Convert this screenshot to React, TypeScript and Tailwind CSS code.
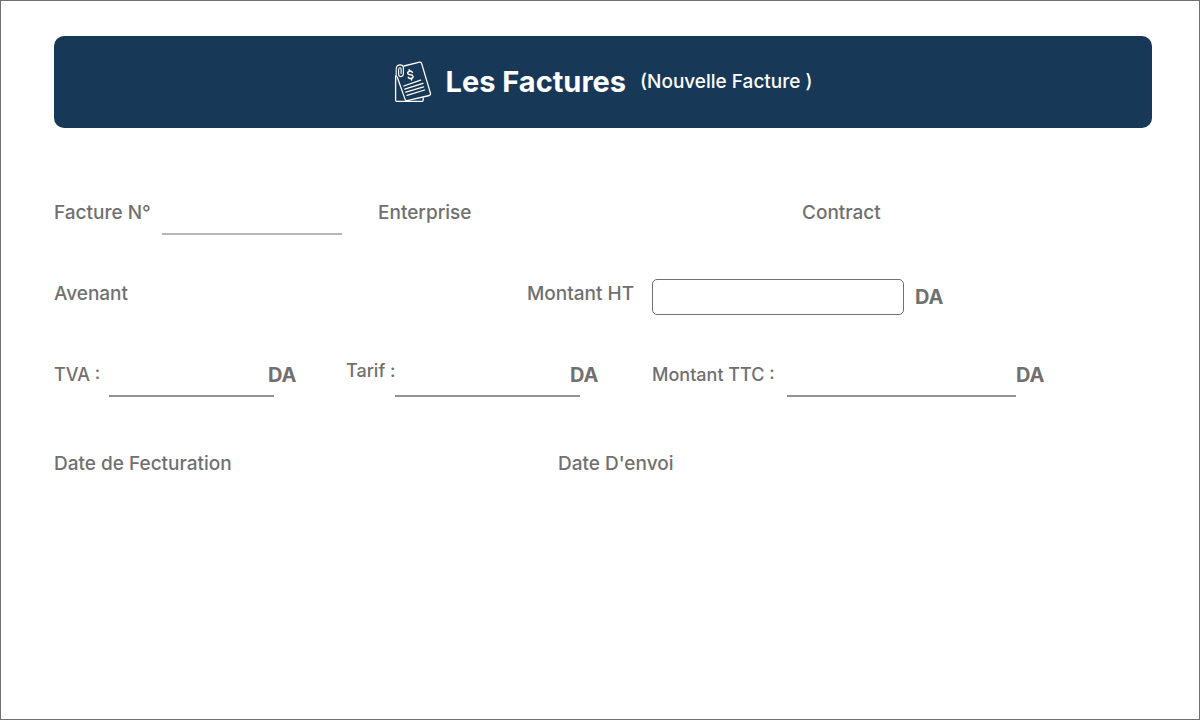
import type { ReactNode } from "react";

function InvoiceIcon() {
  return (
    <svg
      viewBox="0 0 38 42"
      className="h-[42px] w-[38px] shrink-0"
      fill="none"
      stroke="white"
      strokeLinecap="round"
      strokeLinejoin="round"
      aria-hidden="true"
    >
      <path d="M1.6 15V39.3Q1.6 40.4 2.8 40.4H28Q29.2 40.4 29.2 39V37.2" strokeWidth="1.3" />
      <path d="M10 5L25.6 1.2Q27.2.9 27.6 2.4L36.5 32.4Q36.9 34 35.4 34.5L13.2 39.7Q11.7 40 11.2 38.6L3.2 16" strokeWidth="1.3" />
      <path d="M2.2 15.5V8Q2.2 4.4 5.6 3.9Q9 3.6 9.4 6.6V12.6Q9.3 15.6 6.9 15.6Q4.6 15.5 4.6 13V8.6Q4.7 6.7 6 6.7Q7.1 6.7 7.1 8.2V12.4" strokeWidth="1.1" />
      <path d="M18.4 11.4Q17.5 9.8 15.5 10.2Q13.4 10.8 13.8 12.5Q14.2 13.7 16.4 13.7Q18.7 13.8 19 15.3Q19.3 17 17.2 17.5Q15.2 17.9 14.3 16.4M15.2 8.8L15.5 10.2M17.2 17.5L17.6 18.9" strokeWidth="1.5" />
      <path d="M9.8 25L26.6 19.2M10.8 28.2L29 22.4M11.8 31.2L29.6 25.8M13 34.4L30.6 29" strokeWidth="1.3" />
    </svg>
  );
}

const underline = "h-9 min-w-0 border-b-2 bg-transparent px-2 outline-none";

function Currency({ className = "" }: { className?: string }) {
  return <span className={`text-xl leading-7 font-bold ${className}`}>DA</span>;
}

function Field({ children }: { children: ReactNode }) {
  return <div className="flex items-start">{children}</div>;
}

export default function App() {
  return (
    <main className="min-h-screen border border-[#707070] bg-white pt-[35px] pr-[47px] pb-10 pl-[53px] font-['Inter',sans-serif] text-[19px] font-medium text-[#707070]">
      <header className="flex items-center justify-center rounded-[10px] bg-[#183857] py-[25px] text-white">
        <InvoiceIcon />
        <h1 className="ml-3.5 text-[29px] leading-10 font-bold">Les Factures</h1>
        <span className="ml-3.5 leading-10">(Nouvelle Facture )</span>
      </header>

      <form className="mt-[71px]">
        <div className="grid grid-cols-[324fr_424fr_350fr]">
          <Field>
            <label htmlFor="numero" className="w-[108px] shrink-0 leading-7">Facture N°</label>
            <input id="numero" className={`${underline} w-[180px] border-[#b7b7b7]`} />
          </Field>
          <span className="leading-7">Enterprise</span>
          <span className="leading-7">Contract</span>
        </div>

        <div className="mt-11 grid grid-cols-[473fr_625fr]">
          <span className="leading-[30px]">Avenant</span>
          <Field>
            <label htmlFor="ht" className="w-[125px] shrink-0 leading-[30px]">Montant HT</label>
            <input
              id="ht"
              className="h-9 w-[252px] min-w-0 rounded-[5px] border border-[#707070] bg-white px-2 outline-none"
            />
            <Currency className="ml-[11px] self-center" />
          </Field>
        </div>

        <div className="mt-[46px] grid grid-cols-[292fr_306fr_500fr] text-lg">
          <Field>
            <label htmlFor="tva" className="w-[55px] shrink-0 leading-7 whitespace-nowrap">TVA :</label>
            <input id="tva" className={`${underline} w-[165px] border-[#939393]`} />
            <Currency className="-ml-1.5" />
          </Field>
          <Field>
            <label htmlFor="tarif" className="w-[49px] shrink-0 leading-5 whitespace-nowrap">Tarif :</label>
            <input id="tarif" className={`${underline} w-[185px] border-[#939393]`} />
            <Currency className="-ml-2.5" />
          </Field>
          <Field>
            <label htmlFor="ttc" className="w-[135px] shrink-0 leading-7 whitespace-nowrap">Montant TTC :</label>
            <input id="ttc" className={`${underline} w-[229px] border-[#939393]`} />
            <Currency />
          </Field>
        </div>

        <div className="mt-[53px] grid grid-cols-[504fr_594fr]">
          <span className="leading-7">Date de Fecturation</span>
          <span className="leading-7">Date D'envoi</span>
        </div>
      </form>
    </main>
  );
}
